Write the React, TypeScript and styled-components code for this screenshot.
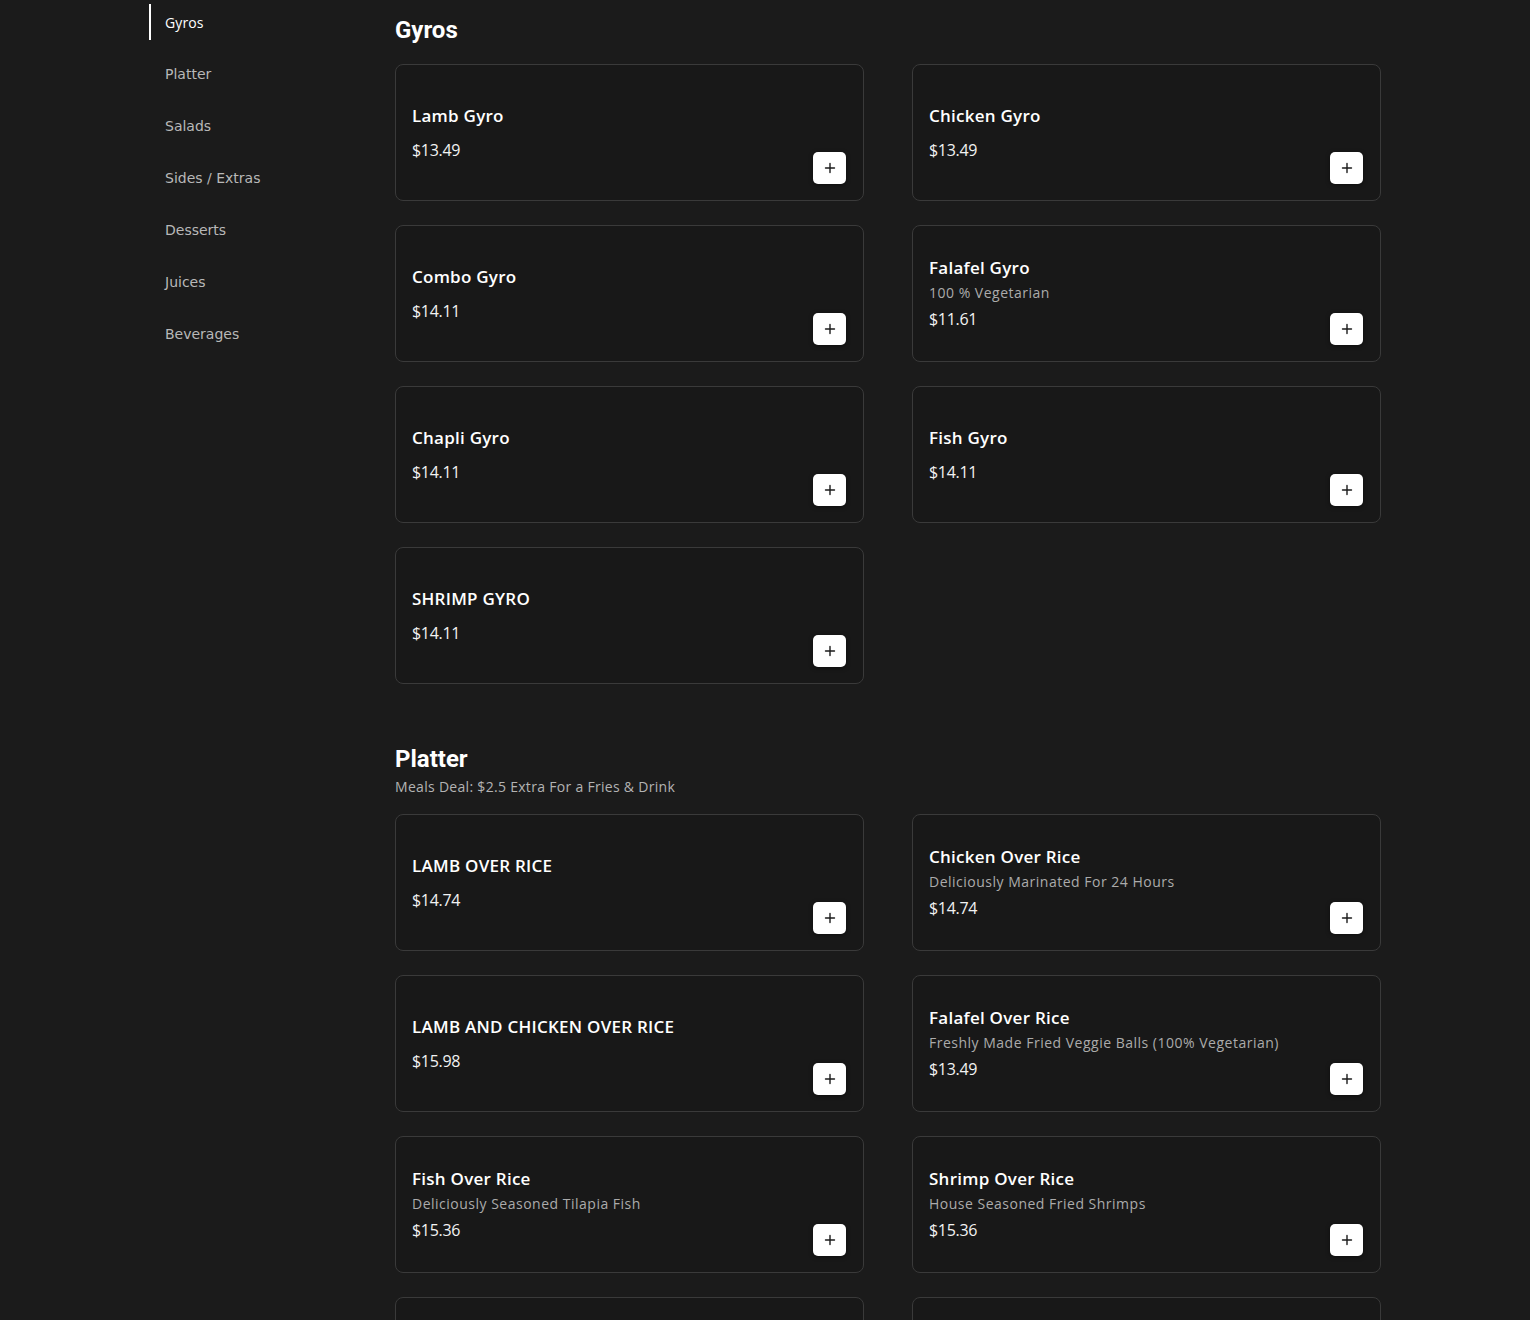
import React from "react";
import styled, { createGlobalStyle } from "styled-components";

const GlobalStyle = createGlobalStyle`
    body{
        margin: 0;
        background: #1b1b1b;
        color: #fff;
        font-family: "DejaVu Sans", sans-serif;
    }
`;

const Page = styled.div`
    max-width: 1232px;
    margin: 0 auto;
    display: grid;
    grid-template-columns: 200px 1fr;
    column-gap: 46px;
`;

const Sidebar = styled.nav`
    display: flex;
    flex-direction: column;
    gap: 16px;
    padding-top: 4px;
`;

const NavItem = styled.a<{ $active?: boolean }>`
    display: flex;
    align-items: center;
    height: 36px;
    padding-left: 14px;
    border-left: 2px solid ${p => p.$active ? "#fff" : "transparent"};
    color: ${p => p.$active ? "#fff" : "#b8b8b8"};
    font-family: ${p => p.$active ? '"Open Sans", sans-serif' : '"DejaVu Sans", sans-serif'};
    font-weight: ${p => p.$active ? 500 : 400};
    font-size: 14px;
    letter-spacing: ${p => p.$active ? "0.1px" : "0"};
    text-decoration: none;
    cursor: pointer;
`;

const Main = styled.main`
    padding-top: 14px;
    display: flex;
    flex-direction: column;
    gap: 59px;
`;

const Section = styled.section``;

const SectionHead = styled.div`
    margin-bottom: 18px;
`;

const Title = styled.h2`
    margin: 0;
    font-family: Roboto, sans-serif;
    font-weight: 700;
    font-size: 24px;
    line-height: 32px;
    color: #fff;
`;

const Subtitle = styled.p`
    margin: 0 0 -3px;
    font-family: "Open Sans", sans-serif;
    font-size: 14px;
    line-height: 24px;
    letter-spacing: 0.3px;
    color: #b3b3b3;
`;

const Grid = styled.div`
    display: grid;
    grid-template-columns: 1fr 1fr;
    column-gap: 48px;
    row-gap: 24px;
`;

const Card = styled.div`
    box-sizing: border-box;
    height: 137px;
    padding: 16px 17px 16px 16px;
    background: #181818;
    border: 1px solid #3a3a3a;
    border-radius: 8px;
    display: flex;
    align-items: center;
    justify-content: space-between;
`;

const Info = styled.div`
    display: flex;
    flex-direction: column;
    font-family: "Open Sans", sans-serif;
`;

const Name = styled.div`
    font-size: 17px;
    font-weight: 600;
    line-height: 24px;
    letter-spacing: 0.25px;
    color: #fff;
    margin-bottom: 10px;
`;

const Desc = styled.div`
    font-size: 14px;
    line-height: 20px;
    letter-spacing: 0.5px;
    color: #ababab;
    margin: -7px 0 4px;
`;

const Price = styled.div`
    font-size: 16px;
    line-height: 24px;
    letter-spacing: -0.3px;
    color: #f2f2f2;
`;

const AddButton = styled.button`
    align-self: flex-end;
    width: 33px;
    height: 32px;
    padding: 0;
    border: none;
    border-radius: 5px;
    background: #fff;
    box-shadow: 0 1px 4px rgba(0, 0, 0, 0.5);
    display: flex;
    align-items: center;
    justify-content: center;
    cursor: pointer;
`;

type Item = { name: string; price: string; desc?: string };

const categories = ["Gyros", "Platter", "Salads", "Sides / Extras", "Desserts", "Juices", "Beverages"];

const sections: { title: string; subtitle?: string; items: Item[] }[] = [
    {
        title: "Gyros",
        items: [
            { name: "Lamb Gyro", price: "$13.49" },
            { name: "Chicken Gyro", price: "$13.49" },
            { name: "Combo Gyro", price: "$14.11" },
            { name: "Falafel Gyro", price: "$11.61", desc: "100 % Vegetarian" },
            { name: "Chapli Gyro", price: "$14.11" },
            { name: "Fish Gyro", price: "$14.11" },
            { name: "SHRIMP GYRO", price: "$14.11" },
        ],
    },
    {
        title: "Platter",
        subtitle: "Meals Deal: $2.5 Extra For a Fries & Drink",
        items: [
            { name: "LAMB OVER RICE", price: "$14.74" },
            { name: "Chicken Over Rice", price: "$14.74", desc: "Deliciously Marinated For 24 Hours" },
            { name: "LAMB AND CHICKEN OVER RICE", price: "$15.98" },
            { name: "Falafel Over Rice", price: "$13.49", desc: "Freshly Made Fried Veggie Balls (100% Vegetarian)" },
            { name: "Fish Over Rice", price: "$15.36", desc: "Deliciously Seasoned Tilapia Fish" },
            { name: "Shrimp Over Rice", price: "$15.36", desc: "House Seasoned Fried Shrimps" },
        ],
    },
];

const Plus = () => (
    <svg width="12" height="12" viewBox="0 0 12 12" fill="none">
        <path d="M6 1.5v9M1.5 6h9" stroke="#1b1b1b" strokeWidth="1.4" strokeLinecap="round" />
    </svg>
);

const MenuCard = ({ item }: { item: Item }) => (
    <Card>
        <Info>
            <Name>{item.name}</Name>
            {item.desc && <Desc>{item.desc}</Desc>}
            <Price>{item.price}</Price>
        </Info>
        <AddButton aria-label={"Add " + item.name}><Plus /></AddButton>
    </Card>
);

// the next row of platter cards peeks in at the bottom edge of the view
const EmptyCard = styled(Card)``;

export default function App() {
    return (
        <>
            <GlobalStyle />
            <Page>
                <Sidebar>
                    {categories.map((c, i) => (
                        <NavItem key={c} $active={i === 0}>{c}</NavItem>
                    ))}
                </Sidebar>
                <Main>
                    {sections.map((s, si) => (
                        <Section key={s.title}>
                            <SectionHead>
                                <Title>{s.title}</Title>
                                {s.subtitle && <Subtitle>{s.subtitle}</Subtitle>}
                            </SectionHead>
                            <Grid>
                                {s.items.map(it => <MenuCard key={it.name} item={it} />)}
                                {si === 1 && <><EmptyCard /><EmptyCard /></>}
                            </Grid>
                        </Section>
                    ))}
                </Main>
            </Page>
        </>
    );
}
